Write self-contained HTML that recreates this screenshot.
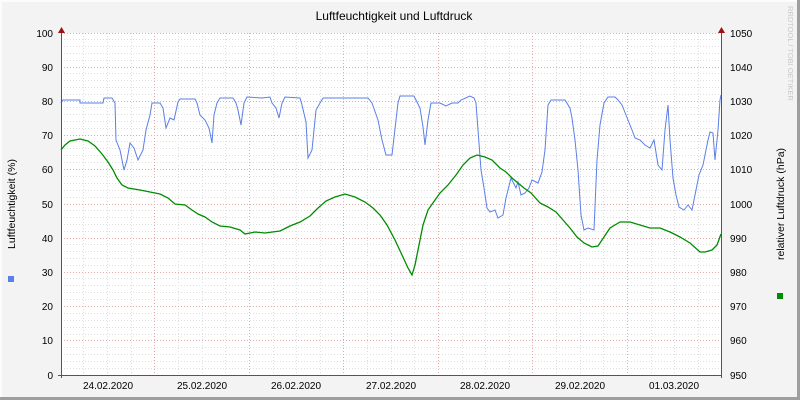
<!DOCTYPE html>
<html><head><meta charset="utf-8"><style>
html,body{margin:0;padding:0;background:#f3f3f3;}
svg{display:block;}
text{font-family:"Liberation Sans",sans-serif;}
</style></head><body>
<svg width="800" height="400" xmlns="http://www.w3.org/2000/svg">
<rect x="0" y="0" width="800" height="400" fill="#f3f3f3"/>
<rect x="0" y="0" width="800" height="2" fill="#fcfcfc"/>
<rect x="0" y="0" width="2" height="400" fill="#fcfcfc"/>
<rect x="0" y="397" width="800" height="3" fill="#9e9e9e"/>
<rect x="797" y="0" width="3" height="400" fill="#9e9e9e"/>
<rect x="61" y="33" width="661" height="342" fill="#ffffff"/>
<g id="grid" stroke-width="1" stroke-dasharray="1,2">
<g stroke="#dedede">
<path d="M61 39.5H722M61 46.5H722M61 53.5H722M61 60.5H722M61 73.5H722M61 80.5H722M61 87.5H722M61 94.5H722M61 107.5H722M61 114.5H722M61 121.5H722M61 128.5H722M61 141.5H722M61 148.5H722M61 155.5H722M61 162.5H722M61 176.5H722M61 183.5H722M61 190.5H722M61 197.5H722M61 210.5H722M61 217.5H722M61 224.5H722M61 231.5H722M61 244.5H722M61 251.5H722M61 258.5H722M61 265.5H722M61 278.5H722M61 285.5H722M61 292.5H722M61 299.5H722M61 313.5H722M61 320.5H722M61 327.5H722M61 334.5H722M61 347.5H722M61 354.5H722M61 361.5H722M61 368.5H722"/>
<path d="M83.5 33V375M107.5 33V375M131.5 33V375M178.5 33V375M202.5 33V375M225.5 33V375M273.5 33V375M296.5 33V375M320.5 33V375M367.5 33V375M391.5 33V375M414.5 33V375M462.5 33V375M485.5 33V375M509.5 33V375M556.5 33V375M580.5 33V375M603.5 33V375M651.5 33V375M674.5 33V375M698.5 33V375"/>
</g>
<g stroke="#e5aaaa">
<path d="M61 33.5H722M61 67.5H722M61 101.5H722M61 135.5H722M61 169.5H722M61 204.5H722M61 238.5H722M61 272.5H722M61 306.5H722M61 340.5H722"/>
<path d="M154.5 33V375M249.5 33V375M343.5 33V375M438.5 33V375M532.5 33V375M627.5 33V375"/>
</g>
</g>
<polyline fill="none" stroke="#5a7fe6" stroke-width="1" points="61,103 63,100 80,100 80,103 103,103 104,98 112,98 115,103 116,140 120,150 124,170 127,160 130,143 134,148 138,160 143,150 146,130 150,115 152,103 155,103 160,103 163,108 166,128 170,118 174,120 178,102 180,99 195,99 197,103 200,115 205,120 209,128 212,143 214,115 217,103 220,98 233,98 236,103 238,110 241,125 244,103 247,97 262,98 270,97 272,103 276,108 279,118 282,103 285,97 300,98 302,105 306,122 308,158 312,150 316,110 320,103 323,98 368,98 372,103 378,120 382,140 386,155 392,155 396,120 398,103 400,96 414,96 416,100 420,108 423,127 425,145 428,120 431,103 440,103 446,106 452,103 458,103 461,100 470,96 474,98 476,103 478,130 481,170 484,188 487,208 490,212 495,210 498,218 503,215 506,198 511,178 516,188 518,182 521,195 525,193 529,188 532,180 538,183 542,172 545,150 548,105 551,100 565,100 570,108 572,118 575,140 578,170 581,215 584,230 588,228 594,230 597,160 600,125 604,103 608,97 615,97 618,100 622,105 626,115 632,130 635,138 640,140 645,145 650,148 654,140 658,165 662,170 665,130 668,105 670,140 673,178 676,195 679,207 684,210 688,205 692,210 695,195 699,175 703,165 708,140 710,132 713,133 715,160 718,130 720,100 721,95"/>
<polyline fill="none" stroke="#008c00" stroke-width="1.3" points="61,150 65,145 70,141 80,139 88,141 95,146 102,154 108,162 113,170 117,178 122,185 128,188 140,190 150,192 160,194 168,198 175,204 185,205 192,210 198,214 205,217 212,222 220,226 230,227 240,230 245,234 255,232 265,233 280,231 290,226 300,222 310,216 318,208 326,201 335,197 345,194 355,197 365,202 373,208 380,215 387,225 395,240 402,255 408,268 412,275 415,265 419,245 423,225 428,210 435,200 440,193 448,185 456,175 463,165 470,158 477,155 485,157 492,160 500,168 506,172 512,178 518,183 524,188 531,193 540,203 548,207 556,212 563,220 570,228 577,237 584,243 592,247 598,246 604,237 610,228 620,222 630,222 640,225 650,228 660,228 670,232 680,237 690,243 700,252 705,252 712,250 717,245 721,234"/>
<line x1="61.5" y1="30" x2="61.5" y2="378" stroke="#555" stroke-width="1"/>
<line x1="721.5" y1="30" x2="721.5" y2="378" stroke="#555" stroke-width="1"/>
<line x1="58" y1="375.5" x2="722" y2="375.5" stroke="#555" stroke-width="1"/>
<polygon points="58,33 65,33 61.5,27" fill="#a01010"/>
<polygon points="718,33 725,33 721.5,27" fill="#a01010"/>
<g font-size="10" fill="#000" text-anchor="end">
<text x="53" y="37">100</text><text x="53" y="71">90</text><text x="53" y="105">80</text><text x="53" y="139">70</text><text x="53" y="173">60</text><text x="53" y="208">50</text><text x="53" y="242">40</text><text x="53" y="276">30</text><text x="53" y="310">20</text><text x="53" y="344">10</text><text x="53" y="379">0</text>
</g>
<g font-size="10" fill="#000">
<text x="730" y="37">1050</text><text x="730" y="71">1040</text><text x="730" y="105">1030</text><text x="730" y="139">1020</text><text x="730" y="173">1010</text><text x="730" y="208">1000</text><text x="730" y="242">990</text><text x="730" y="276">980</text><text x="730" y="310">970</text><text x="730" y="344">960</text><text x="730" y="379">950</text>
</g>
<g font-size="10" fill="#000" text-anchor="middle">
<text x="108" y="389">24.02.2020</text><text x="202" y="389">25.02.2020</text><text x="296" y="389">26.02.2020</text><text x="391" y="389">27.02.2020</text><text x="485" y="389">28.02.2020</text><text x="580" y="389">29.02.2020</text><text x="674" y="389">01.03.2020</text>
</g>
<text x="394" y="20" font-size="12" text-anchor="middle" fill="#000">Luftfeuchtigkeit und Luftdruck</text>
<text transform="translate(15,204) rotate(-90)" font-size="10.5" text-anchor="middle" fill="#000">Luftfeuchtigkeit (%)</text>
<text transform="translate(784,204) rotate(-90)" font-size="10.5" text-anchor="middle" fill="#000">relativer Luftdruck (hPa)</text>
<text transform="translate(788,6) rotate(90)" font-size="7.5" fill="#c8c8c8">RRDTOOL / TOBI OETIKER</text>
<rect x="8" y="276" width="6" height="6" fill="#5a7fe6"/>
<rect x="777" y="293" width="6" height="6" fill="#008c00"/>
</svg>
</body></html>
